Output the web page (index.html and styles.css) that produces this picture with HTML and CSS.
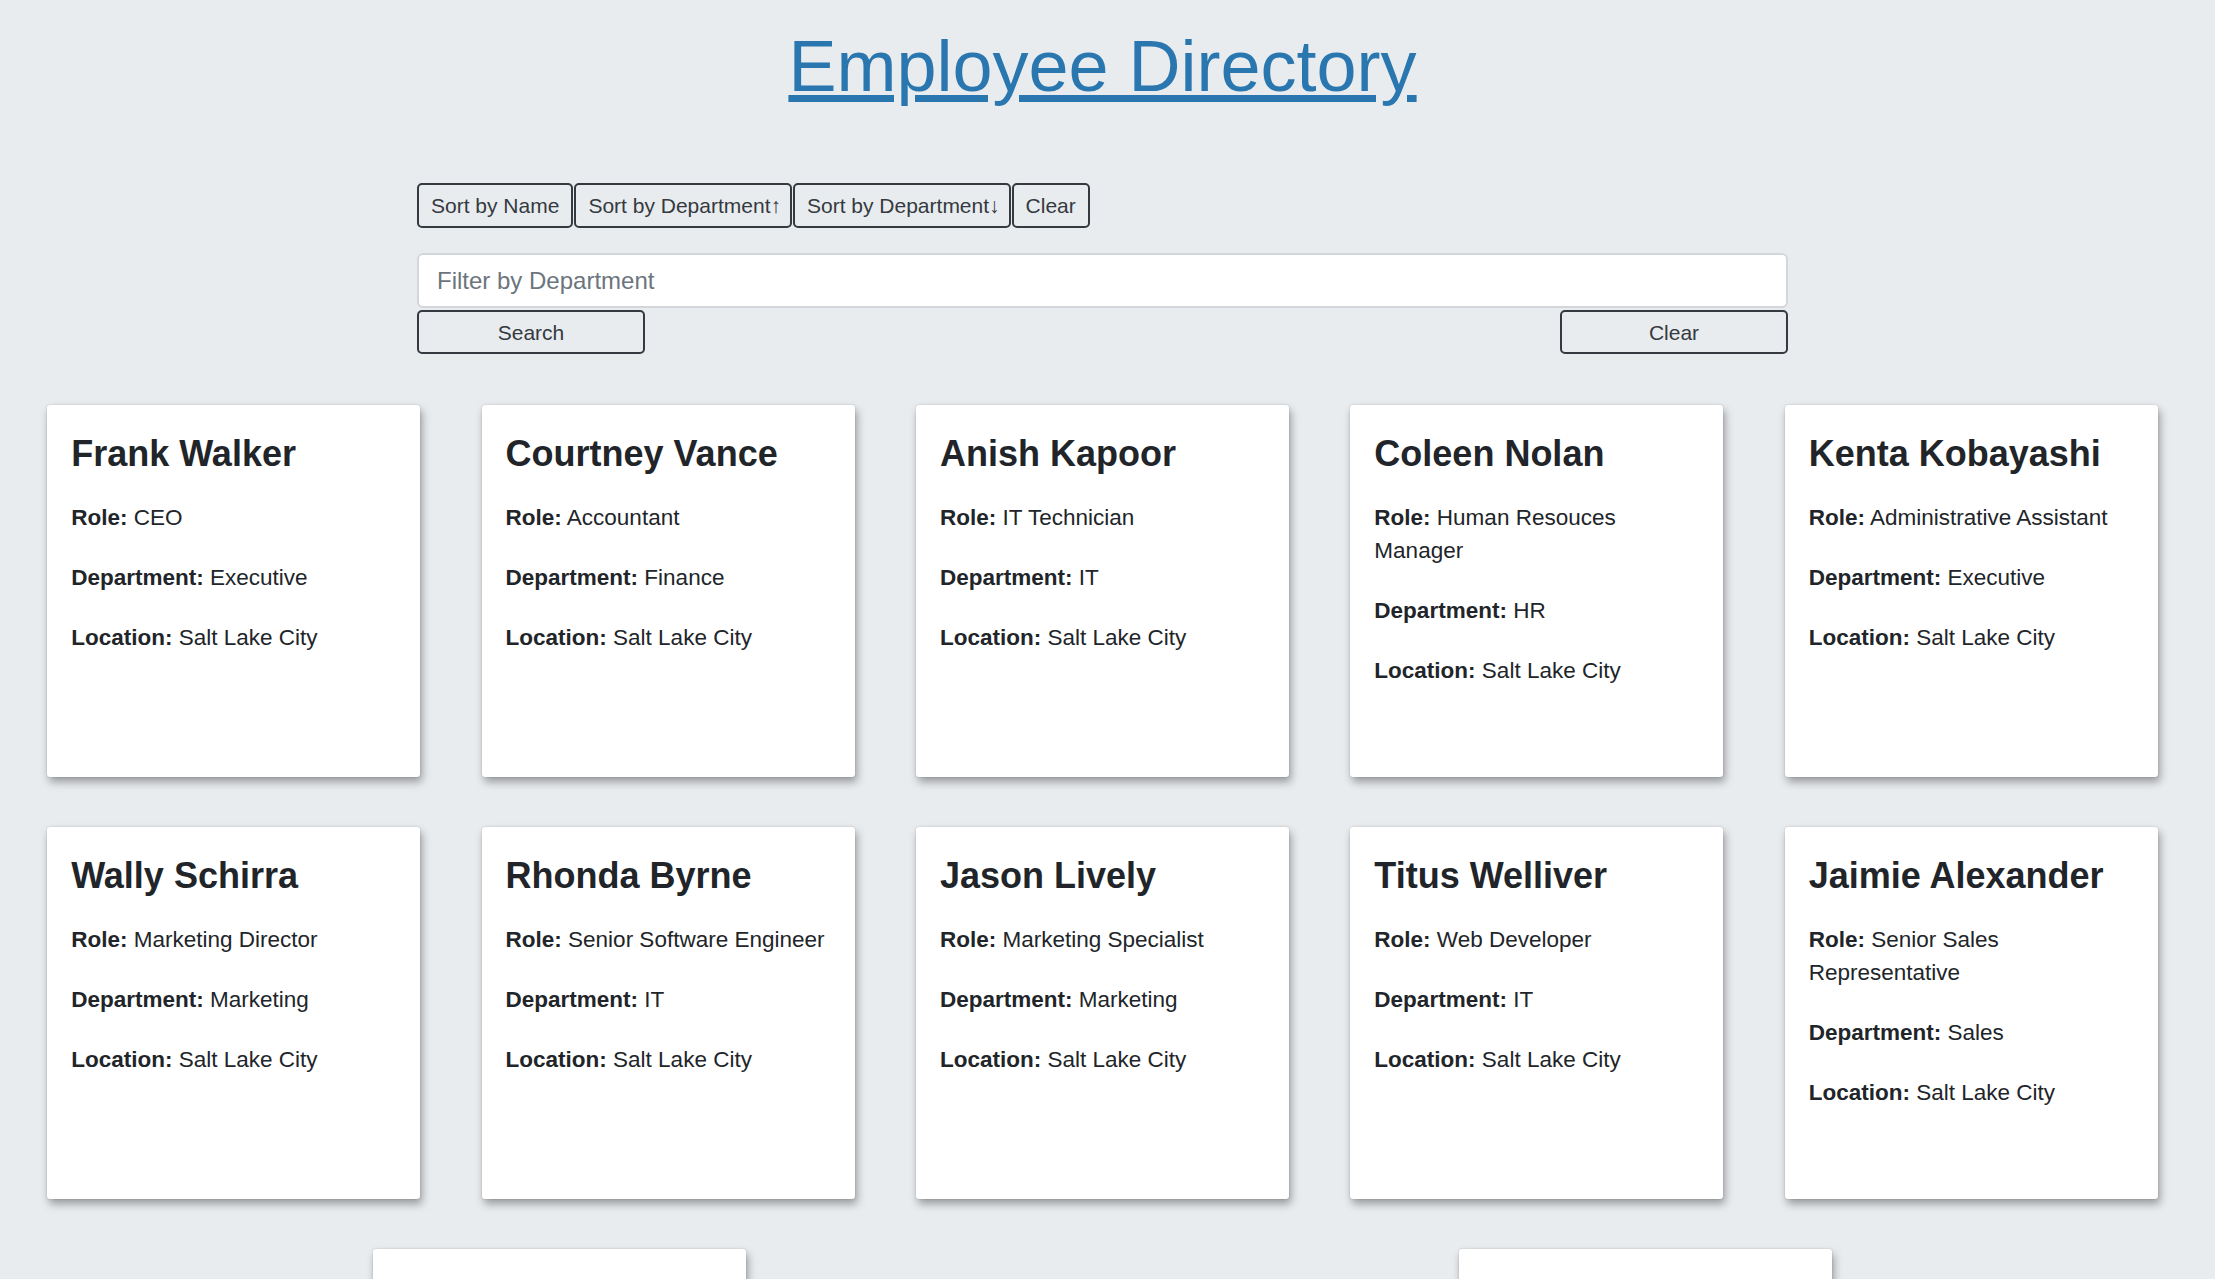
FILE: index.html
```html
<!DOCTYPE html>
<html lang="en">
<head>
<meta charset="utf-8">
<title>Employee Directory</title>
<link rel="stylesheet" href="styles.css">
</head>
<body>
<main class="page">
  <h1 class="title"><a href="#">Employee Directory</a></h1>

  <section class="controls">
    <div class="sort-bar">
      <button class="btn">Sort by Name</button>
      <button class="btn">Sort by Department<span class="arrow">↑</span></button>
      <button class="btn">Sort by Department<span class="arrow">↓</span></button>
      <button class="btn">Clear</button>
    </div>
    <input class="filter-input" type="text" placeholder="Filter by Department">
    <div class="filter-actions">
      <button class="btn btn-wide">Search</button>
      <button class="btn btn-wide">Clear</button>
    </div>
  </section>

  <section class="cards">
    <article class="card">
      <h2 class="card-name">Frank Walker</h2>
      <p class="card-field"><strong>Role:</strong> CEO</p>
      <p class="card-field"><strong>Department:</strong> Executive</p>
      <p class="card-field"><strong>Location:</strong> Salt Lake City</p>
    </article>
    <article class="card">
      <h2 class="card-name">Courtney Vance</h2>
      <p class="card-field"><strong>Role:</strong> Accountant</p>
      <p class="card-field"><strong>Department:</strong> Finance</p>
      <p class="card-field"><strong>Location:</strong> Salt Lake City</p>
    </article>
    <article class="card">
      <h2 class="card-name">Anish Kapoor</h2>
      <p class="card-field"><strong>Role:</strong> IT Technician</p>
      <p class="card-field"><strong>Department:</strong> IT</p>
      <p class="card-field"><strong>Location:</strong> Salt Lake City</p>
    </article>
    <article class="card">
      <h2 class="card-name">Coleen Nolan</h2>
      <p class="card-field"><strong>Role:</strong> Human Resouces Manager</p>
      <p class="card-field"><strong>Department:</strong> HR</p>
      <p class="card-field"><strong>Location:</strong> Salt Lake City</p>
    </article>
    <article class="card">
      <h2 class="card-name">Kenta Kobayashi</h2>
      <p class="card-field"><strong>Role:</strong> Administrative Assistant</p>
      <p class="card-field"><strong>Department:</strong> Executive</p>
      <p class="card-field"><strong>Location:</strong> Salt Lake City</p>
    </article>
    <article class="card">
      <h2 class="card-name">Wally Schirra</h2>
      <p class="card-field"><strong>Role:</strong> Marketing Director</p>
      <p class="card-field"><strong>Department:</strong> Marketing</p>
      <p class="card-field"><strong>Location:</strong> Salt Lake City</p>
    </article>
    <article class="card">
      <h2 class="card-name">Rhonda Byrne</h2>
      <p class="card-field"><strong>Role:</strong> Senior Software Engineer</p>
      <p class="card-field"><strong>Department:</strong> IT</p>
      <p class="card-field"><strong>Location:</strong> Salt Lake City</p>
    </article>
    <article class="card">
      <h2 class="card-name">Jason Lively</h2>
      <p class="card-field"><strong>Role:</strong> Marketing Specialist</p>
      <p class="card-field"><strong>Department:</strong> Marketing</p>
      <p class="card-field"><strong>Location:</strong> Salt Lake City</p>
    </article>
    <article class="card">
      <h2 class="card-name">Titus Welliver</h2>
      <p class="card-field"><strong>Role:</strong> Web Developer</p>
      <p class="card-field"><strong>Department:</strong> IT</p>
      <p class="card-field"><strong>Location:</strong> Salt Lake City</p>
    </article>
    <article class="card">
      <h2 class="card-name">Jaimie Alexander</h2>
      <p class="card-field"><strong>Role:</strong> Senior Sales Representative</p>
      <p class="card-field"><strong>Department:</strong> Sales</p>
      <p class="card-field"><strong>Location:</strong> Salt Lake City</p>
    </article>
    <article class="card">
      <h2 class="card-name">Maria Lopez</h2>
      <p class="card-field"><strong>Role:</strong> Sales Representative</p>
      <p class="card-field"><strong>Department:</strong> Sales</p>
      <p class="card-field"><strong>Location:</strong> Salt Lake City</p>
    </article>
    <article class="card">
      <h2 class="card-name">David Chen</h2>
      <p class="card-field"><strong>Role:</strong> Financial Analyst</p>
      <p class="card-field"><strong>Department:</strong> Finance</p>
      <p class="card-field"><strong>Location:</strong> Salt Lake City</p>
    </article>
  </section>
</main>
</body>
</html>
```

FILE: styles.css
```css
html, body {
  margin: 0;
}

body {
  padding-right: 10px;
  background: #e9ecef;
  font-family: "Liberation Sans", Arial, sans-serif;
  color: #212529;
}

.title {
  margin: 23px 0 0;
  text-align: center;
  font-size: 72px;
  line-height: 86px;
  font-weight: normal;
}

.title a {
  color: #2a77b0;
  text-decoration: underline;
}

.controls {
  width: 1371px;
  margin: 74px auto 0;
}

.sort-bar {
  display: flex;
  gap: 1px;
}

.btn {
  flex: 0 0 auto;
  white-space: nowrap;
  font-family: "Liberation Sans", Arial, sans-serif;
  font-size: 21px;
  line-height: 31px;
  padding: 5px 12px;
  border: 2px solid #343a40;
  border-radius: 5px;
  background: transparent;
  color: #343a40;
  cursor: pointer;
}

.arrow {
  display: inline-block;
  margin-right: -3px;
}

.filter-input {
  display: block;
  box-sizing: border-box;
  width: 100%;
  height: 55px;
  margin-top: 25px;
  padding: 0 18px;
  font-family: "Liberation Sans", Arial, sans-serif;
  font-size: 24px;
  color: #495057;
  background: #fff;
  border: 2px solid #d3d7db;
  border-radius: 6px;
  outline: none;
}

.filter-input::placeholder {
  color: #6c757d;
}

.filter-actions {
  display: flex;
  justify-content: space-between;
  margin-top: 2px;
}

.btn-wide {
  box-sizing: border-box;
  width: 228px;
  height: 44px;
  padding: 0;
}

.cards {
  display: flex;
  flex-wrap: wrap;
  justify-content: space-around;
  margin: 26px 16.5px 0;
}

.card {
  box-sizing: border-box;
  width: 373px;
  height: 372px;
  margin: 25px;
  padding: 27px 24px 24px;
  background: #fff;
  border-radius: 3px;
  box-shadow: 2px 5px 9px rgba(0, 0, 0, 0.35), 0 0 2px rgba(0, 0, 0, 0.18);
}

.card-name {
  margin: 0 0 26px;
  font-size: 36px;
  line-height: 43px;
  font-weight: bold;
}

.card-field {
  margin: 0 0 27px;
  font-size: 22.5px;
  line-height: 33px;
}

.card-field strong {
  font-weight: bold;
}
```
